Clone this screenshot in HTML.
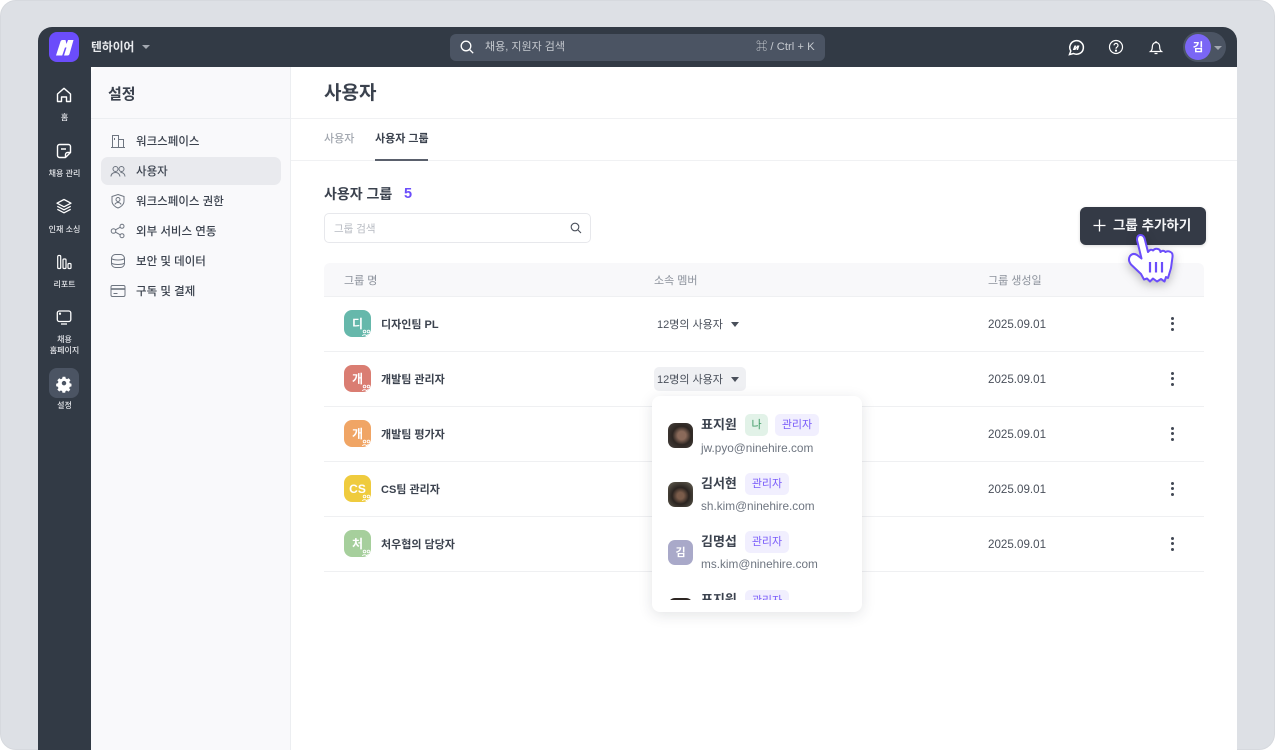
<!DOCTYPE html>
<html lang="ko"><head><meta charset="utf-8"><title>사용자 그룹</title>
<style>
*{box-sizing:border-box;margin:0;padding:0}
html,body{width:1275px;height:750px;overflow:hidden;background:#fff;font-family:"Liberation Sans","Noto Sans CJK KR",sans-serif;color:#343a46}
.a{position:absolute;white-space:nowrap}
#bg{left:0;top:0;width:1275px;height:750px;background:#dde0e5;border-radius:16px;border:1px solid #d6d9de}
#win{left:38px;top:27px;width:1199px;height:723px;background:#fff;border-radius:14px 14px 0 0;overflow:hidden}
#dark{left:38px;top:27px;width:1199px;height:40px;background:#323a45;border-radius:14px 14px 0 0}
#rail{left:38px;top:60px;width:53px;height:690px;background:#323a45}
#side{left:91px;top:67px;width:200px;height:683px;background:#f9f9fb;border-radius:8px 0 0 0;border-right:1px solid #eceef1}
.rl{left:38px;width:53px;text-align:center;font-size:8px;line-height:11px;color:#e4e6ea;font-weight:500;white-space:normal}
.mi{left:136px;font-size:11.5px;line-height:16px;font-weight:500;color:#3b424e}
svg{position:absolute;overflow:visible}
.th{font-size:11px;line-height:16px;color:#8c929c;top:273px}
.rowl{left:324px;width:880px;height:1px;background:#eff0f2}
.gi{left:344px;width:27px;height:27px;border-radius:8px;color:#fff;font-size:12px;font-weight:700;line-height:28px;text-align:center}
.gn{left:381px;font-size:11px;font-weight:700;line-height:16px;color:#3b424e}
.um{left:657px;font-size:11px;line-height:16px;color:#4a505b}
.dt{left:988px;font-size:11.6px;line-height:16px;color:#4a505b}
.kd{left:1171px;width:3px;height:3px;border-radius:50%;background:#424854}
.pn{font-size:13px;font-weight:700;line-height:18px;color:#3b424e}
.em{font-size:11.8px;line-height:16px;color:#6e7580}
.bd{height:22px;border-radius:5px;background:#f1effe;color:#7a5cfa;font-size:11px;line-height:23px;text-align:center}
</style></head><body>
<div class="a" id="bg"></div>
<div class="a" id="win"></div>
<div class="a" id="dark"></div>
<div class="a" id="rail"></div>
<div class="a" id="side"></div>

<!-- logo -->
<div class="a" style="left:49px;top:32px;width:30px;height:30px;border-radius:8px;background:#6b4dfb"></div>
<svg style="left:49px;top:32px" width="30" height="30"><path fill="#fff" d="M7 23.500 L11.500 9.500 Q12 8 13.500 8 L16.500 8 L17.500 12 L19 8 L24.500 8 L20.500 22 Q20 23.500 18.500 23.500 L15 23.500 L17.500 15.500 L16 15.500 L13.200 23.500 Z"/></svg>
<div class="a" style="left:91px;top:38px;font-size:11.8px;line-height:18px;font-weight:700;color:#e9ebee">텐하이어</div>
<div class="a" style="left:142px;top:45px;width:0;height:0;border-left:4px solid transparent;border-right:4px solid transparent;border-top:4px solid #a3a8b0"></div>

<!-- search -->
<div class="a" style="left:450px;top:34px;width:375px;height:27px;border-radius:6px;background:#4b5463"></div>
<svg style="left:460px;top:40px" width="15" height="15" fill="none" stroke="#fff" stroke-width="1.3"><circle cx="6" cy="6" r="4.800"/><path d="M9.500 9.500l3.700 3.700"/></svg>
<div class="a" style="left:485px;top:39px;font-size:11px;line-height:16px;color:#c5c9cf">채용, 지원자 검색</div>
<div class="a" style="left:756px;top:39px;font-size:11.300px;line-height:16px;color:#c5c9cf">⌘ / Ctrl + K</div>

<!-- top icons -->
<svg style="left:1067px;top:38.500px" width="18" height="18" fill="none" stroke="#fff" stroke-width="1.500"><path d="M2.500 15.500 L3.800 12 A6.800 6.800 0 1 1 6.500 14.500Z"/><path d="M5.800 11 L7.500 6.500 H9.300 L8.500 9 L10.300 6.500 H12.500 L11 11 H9.500 L10.200 8.800 L8.300 11Z" fill="#fff" stroke="none"/></svg>
<svg style="left:1107px;top:38px" width="18" height="18" fill="none" stroke="#fff" stroke-width="1.200"><circle cx="9" cy="9" r="6.500"/><path d="M7 7.300a2 2 0 1 1 3 1.800c-.7.400-1 .8-1 1.600"/><circle cx="9" cy="12.600" r=".5" fill="#fff"/></svg>
<svg style="left:1147px;top:37.500px" width="18" height="18" fill="none" stroke="#fff" stroke-width="1.200"><path d="M3.500 13.500h11c-1.300-1-1.800-2.200-1.800-4.500 0-2.700-1.500-4.500-3.700-4.500S5.300 6.300 5.300 9c0 2.300-.5 3.500-1.800 4.500z"/><path d="M7.500 15.500h3M9 3v1.500"/></svg>
<div class="a" style="left:1183px;top:32px;width:43px;height:30px;border-radius:15px;background:#4b5463"></div>
<div class="a" style="left:1185px;top:34px;width:26px;height:26px;border-radius:50%;background:#7a66f5;color:#fff;font-size:11.500px;font-weight:700;line-height:28px;text-align:center">김</div>
<div class="a" style="left:1214px;top:46px;width:0;height:0;border-left:4px solid transparent;border-right:4px solid transparent;border-top:4px solid #a3a8b0"></div>

<!-- rail -->
<svg style="left:55px;top:86px" width="18" height="18" fill="none" stroke="#fff" stroke-width="1.400" stroke-linejoin="round"><path d="M2.500 8 L9 2.300 L15.500 8 V15.500 H11.500 V11 H6.500 V15.500 H2.500Z"/></svg>
<div class="a rl" style="top:112px">홈</div>
<svg style="left:55px;top:142px" width="18" height="18" fill="none" stroke="#fff" stroke-width="1.400" stroke-linejoin="round"><path d="M4.500 2.500h9a2 2 0 0 1 2 2v6l-5 5h-6a2 2 0 0 1-2-2v-9a2 2 0 0 1 2-2z"/><path d="M6 7h5M10.500 15.500v-3a2 2 0 0 1 2-2h3"/></svg>
<div class="a rl" style="top:168px">채용 관리</div>
<svg style="left:55px;top:197px" width="18" height="18" fill="none" stroke="#fff" stroke-width="1.300" stroke-linejoin="round"><path d="M9 2.500 L16 6.200 L9 9.800 L2 6.200Z"/><path d="M2.300 9.300 L9 12.800 L15.700 9.300M2.300 12.300 L9 15.800 L15.700 12.300"/></svg>
<div class="a rl" style="top:224px">인재 소싱</div>
<svg style="left:55px;top:253px" width="18" height="18" fill="none" stroke="#fff" stroke-width="1.200"><rect x="2.700" y="2.500" width="3" height="13" rx="1"/><rect x="8" y="6" width="3" height="9.500" rx="1"/><rect x="13" y="10.500" width="3" height="5" rx="1"/></svg>
<div class="a rl" style="top:279px">리포트</div>
<svg style="left:55px;top:308px" width="18" height="18" fill="none" stroke="#fff" stroke-width="1.300"><rect x="2.300" y="3" width="13.500" height="10.500" rx="2"/><path d="M6 16h6"/><circle cx="5" cy="5.700" r=".5" fill="#fff"/></svg>
<div class="a rl" style="top:334px">채용<br>홈페이지</div>
<div class="a" style="left:49px;top:368px;width:30px;height:30px;border-radius:8px;background:#4b5463"></div>
<svg style="left:55px;top:374px" width="18" height="18"><path fill="#fff" fill-rule="evenodd" d="M7.500 2h3l.4 2 1.500.7 1.800-1 2 2.300-1.300 1.600.4 1.500 2 .7v2.900l-2 .6-.5 1.500 1.200 1.700-2.100 2.100-1.700-1.200-1.500.6-.4 1.900h-3l-.4-2-1.400-.6-1.800 1.200-2.100-2.100 1.200-1.700-.6-1.500-1.900-.6V9.800l2-.7.5-1.500-1.200-1.700 2.100-2.200 1.700 1.100 1.500-.6z M9 6.700a2.500 2.500 0 1 0 0 5 2.500 2.500 0 0 0 0-5z" transform="translate(.9 .9) scale(.9)"/></svg>
<div class="a rl" style="top:400px">설정</div>

<!-- settings menu -->
<div class="a" style="left:108px;top:84px;font-size:15px;line-height:22px;font-weight:700;color:#3b424e">설정</div>
<div class="a" style="left:91px;top:118px;width:199px;height:1px;background:#eceef1"></div>
<div class="a" style="left:101px;top:157px;width:180px;height:28px;border-radius:7px;background:#e9eaee"></div>
<svg style="left:110px;top:133px" width="16" height="16" fill="none" stroke="#6e7580" stroke-width="1"><path d="M1 14.500h14M2.500 14.500V2.500h6v12M8.500 6.500h5v8M4.500 5v2"/></svg>
<div class="a mi" style="top:134px">워크스페이스</div>
<svg style="left:110px;top:163px" width="16" height="16" fill="none" stroke="#6e7580" stroke-width="1"><circle cx="5.500" cy="6" r="2.500"/><circle cx="11.500" cy="6" r="2.500"/><path d="M1 13.500c0-2.500 2-4 4.500-4s4 1.500 4.500 4M10.500 9.500c2.500-.3 4.500 1.500 4.500 4"/></svg>
<div class="a mi" style="top:164px">사용자</div>
<svg style="left:110px;top:193px" width="16" height="16" fill="none" stroke="#6e7580" stroke-width="1"><path d="M8 1.500 L14 3.500 V8 C14 11.500 11 14 8 15 C5 14 2 11.500 2 8 V3.500Z"/><circle cx="8" cy="6.500" r="2"/><path d="M4.800 11.500c.8-1.500 1.800-2 3.200-2s2.400.5 3.200 2"/></svg>
<div class="a mi" style="top:194px">워크스페이스 권한</div>
<svg style="left:110px;top:223px" width="16" height="16" fill="none" stroke="#6e7580" stroke-width="1"><circle cx="3.500" cy="8" r="2.300"/><circle cx="12" cy="3.300" r="2"/><circle cx="12" cy="12.700" r="2"/><path d="M5.500 6.800l4.800-2.600M5.500 9.200l4.800 2.600"/></svg>
<div class="a mi" style="top:224px">외부 서비스 연동</div>
<svg style="left:110px;top:253px" width="16" height="16" fill="none" stroke="#6e7580" stroke-width="1"><rect x="1.500" y="1.500" width="13" height="13" rx="4"/><path d="M1.500 5.500c2 2 11 2 13 0M1.500 10c2 2 11 2 13 0"/></svg>
<div class="a mi" style="top:254px">보안 및 데이터</div>
<svg style="left:110px;top:283px" width="16" height="16" fill="none" stroke="#6e7580" stroke-width="1"><rect x="1" y="2.500" width="14" height="11" rx="1.500"/><path d="M1 6h14" stroke-width="1.600"/><path d="M3.500 10.500h4"/></svg>
<div class="a mi" style="top:284px">구독 및 결제</div>

<!-- main -->
<div class="a" style="left:324px;top:80px;font-size:19px;line-height:27px;font-weight:700;color:#3b424e">사용자</div>
<div class="a" style="left:291px;top:118px;width:946px;height:1px;background:#f0f1f3"></div>
<div class="a" style="left:324px;top:131px;font-size:11px;line-height:16px;font-weight:500;color:#a3a8b0">사용자</div>
<div class="a" style="left:375px;top:131px;font-size:11px;line-height:16px;font-weight:700;color:#3b424e">사용자 그룹</div>
<div class="a" style="left:291px;top:160px;width:946px;height:1px;background:#f0f1f3"></div>
<div class="a" style="left:375px;top:159px;width:53px;height:1.500px;background:#5a606c"></div>
<div class="a" style="left:324px;top:184px;font-size:14px;line-height:20px;font-weight:700;color:#3b424e">사용자 그룹</div>
<div class="a" style="left:404px;top:184px;font-size:14.500px;line-height:20px;font-weight:700;color:#6b4dfb">5</div>
<div class="a" style="left:324px;top:213px;width:267px;height:30px;border:1px solid #e7e8ec;border-radius:5px;background:#fff"></div>
<div class="a" style="left:334px;top:221px;font-size:10.500px;line-height:16px;color:#b6bac1">그룹 검색</div>
<svg style="left:570px;top:222px" width="12" height="12" fill="none" stroke="#4a505b" stroke-width="1.100"><circle cx="5" cy="5" r="3.800"/><path d="M8 8l3 3"/></svg>

<!-- add button -->
<div class="a" style="left:1080px;top:207px;width:126px;height:38px;border-radius:6px;background:#343a46;box-shadow:0 1px 3px rgba(0,0,0,.15)"></div>
<svg style="left:1092px;top:218px" width="15" height="15" stroke="#fff" stroke-width="1.300"><path d="M7.500 1.500v12M1.500 7.500h12"/></svg>
<div class="a" style="left:1113px;top:216px;font-size:13.500px;line-height:19px;font-weight:700;color:#f3f4f6">그룹 추가하기</div>

<!-- table -->
<div class="a" style="left:324px;top:263px;width:880px;height:33px;background:#f8f8fa;border-radius:6px 6px 0 0"></div>
<div class="a th" style="left:344px">그룹 명</div>
<div class="a th" style="left:654px">소속 멤버</div>
<div class="a th" style="left:988px">그룹 생성일</div>
<div class="a rowl" style="top:296px"></div>
<div class="a rowl" style="top:351px"></div>
<div class="a rowl" style="top:406px"></div>
<div class="a rowl" style="top:461px"></div>
<div class="a rowl" style="top:516px"></div>
<div class="a rowl" style="top:571px"></div>

<div class="a gi" style="top:310px;background:#66b8ab">디</div>
<div class="a gn" style="top:317px">디자인팀 PL</div>
<div class="a gi" style="top:365px;background:#da7d72">개</div>
<div class="a gn" style="top:372px">개발팀 관리자</div>
<div class="a gi" style="top:420px;background:#f0a565">개</div>
<div class="a gn" style="top:427px">개발팀 평가자</div>
<div class="a gi" style="top:475px;background:#efcb3e">CS</div>
<div class="a gn" style="top:482px">CS팀 관리자</div>
<div class="a gi" style="top:530px;background:#a6cf9c">처</div>
<div class="a gn" style="top:537px">처우협의 담당자</div>
<svg style="left:0;top:0" width="1275" height="750" fill="none" stroke="#fff" stroke-width=".9">
<g><circle cx="364.500" cy="331.500" r="1.300"/><circle cx="368.500" cy="331.500" r="1.300"/><path d="M362.500 336c.2-1.800 3.800-1.800 4 0M366.500 336c.2-1.800 3.800-1.800 4 0"/></g>
<g transform="translate(0 55)"><circle cx="364.500" cy="331.500" r="1.300"/><circle cx="368.500" cy="331.500" r="1.300"/><path d="M362.500 336c.2-1.800 3.800-1.800 4 0M366.500 336c.2-1.800 3.800-1.800 4 0"/></g>
<g transform="translate(0 110)"><circle cx="364.500" cy="331.500" r="1.300"/><circle cx="368.500" cy="331.500" r="1.300"/><path d="M362.500 336c.2-1.800 3.800-1.800 4 0M366.500 336c.2-1.800 3.800-1.800 4 0"/></g>
<g transform="translate(0 165)"><circle cx="364.500" cy="331.500" r="1.300"/><circle cx="368.500" cy="331.500" r="1.300"/><path d="M362.500 336c.2-1.800 3.800-1.800 4 0M366.500 336c.2-1.800 3.800-1.800 4 0"/></g>
<g transform="translate(0 220)"><circle cx="364.500" cy="331.500" r="1.300"/><circle cx="368.500" cy="331.500" r="1.300"/><path d="M362.500 336c.2-1.800 3.800-1.800 4 0M366.500 336c.2-1.800 3.800-1.800 4 0"/></g>
</svg>

<div class="a um" style="top:317px">12명의 사용자</div>
<div class="a" style="left:731px;top:322px;width:0;height:0;border-left:4px solid transparent;border-right:4px solid transparent;border-top:5px solid #4a505b"></div>
<div class="a" style="left:654px;top:367px;width:92px;height:24px;border-radius:5px;background:#eff0f3"></div>
<div class="a um" style="top:372px">12명의 사용자</div>
<div class="a" style="left:731px;top:377px;width:0;height:0;border-left:4px solid transparent;border-right:4px solid transparent;border-top:5px solid #4a505b"></div>

<div class="a dt" style="top:317px">2025.09.01</div>
<div class="a dt" style="top:372px">2025.09.01</div>
<div class="a dt" style="top:427px">2025.09.01</div>
<div class="a dt" style="top:482px">2025.09.01</div>
<div class="a dt" style="top:537px">2025.09.01</div>
<div class="a kd" style="top:317px"></div><div class="a kd" style="top:322px"></div><div class="a kd" style="top:328px"></div>
<div class="a kd" style="top:372px"></div><div class="a kd" style="top:377px"></div><div class="a kd" style="top:383px"></div>
<div class="a kd" style="top:427px"></div><div class="a kd" style="top:432px"></div><div class="a kd" style="top:438px"></div>
<div class="a kd" style="top:482px"></div><div class="a kd" style="top:487px"></div><div class="a kd" style="top:493px"></div>
<div class="a kd" style="top:537px"></div><div class="a kd" style="top:542px"></div><div class="a kd" style="top:548px"></div>

<!-- dropdown -->
<div class="a" style="left:652px;top:396px;width:210px;height:216px;background:#fff;border-radius:8px;box-shadow:0 3px 14px rgba(40,45,60,.13)"></div>
<div class="a" style="left:653px;top:400px;width:209px;height:200px;overflow:hidden">
  <div class="a" style="left:15px;top:23px;width:25px;height:25px;border-radius:7px;background:radial-gradient(circle at 55% 50%,#8a6a5a 0 22%,#2d2622 50%,#4a4440 100%)"></div>
  <div class="a pn" style="left:48px;top:16px">표지원</div>
  <div class="a bd" style="left:92px;top:14px;width:23px;background:#e2f2e8;color:#3f9a66">나</div>
  <div class="a bd" style="left:122px;top:14px;width:44px">관리자</div>
  <div class="a em" style="left:48px;top:40px">jw.pyo@ninehire.com</div>

  <div class="a" style="left:15px;top:82px;width:25px;height:25px;border-radius:7px;background:radial-gradient(circle at 50% 55%,#7a5c4a 0 18%,#2a2420 45%,#6a6658 100%)"></div>
  <div class="a pn" style="left:48px;top:75px">김서현</div>
  <div class="a bd" style="left:92px;top:73px;width:44px">관리자</div>
  <div class="a em" style="left:48px;top:98px">sh.kim@ninehire.com</div>

  <div class="a" style="left:15px;top:140px;width:25px;height:25px;border-radius:7px;background:#a9a9c9;color:#fff;font-size:11px;font-weight:700;line-height:26px;text-align:center">김</div>
  <div class="a pn" style="left:48px;top:133px">김명섭</div>
  <div class="a bd" style="left:92px;top:131px;width:44px">관리자</div>
  <div class="a em" style="left:48px;top:156px">ms.kim@ninehire.com</div>

  <div class="a" style="left:15px;top:198px;width:25px;height:25px;border-radius:7px;background:#2d2622"></div>
  <div class="a pn" style="left:48px;top:191px">표지원</div>
  <div class="a bd" style="left:92px;top:190px;width:44px">관리자</div>
</div>

<!-- cursor -->
<svg style="left:0;top:0;filter:drop-shadow(0 3px 5px rgba(0,0,0,.25))" width="1275" height="750">
<path d="M1137 240 Q1137 235 1140.500 235 Q1144 235 1145 240 L1148 252 Q1150.500 248.500 1153 250.500 Q1155 248 1158 249 Q1160 249.500 1160.500 252 Q1163 249.500 1165.500 252 Q1168 250.500 1170.500 252 Q1173 253 1172.500 257 L1171 268 L1168 278 L1166 277 L1164.500 281.500 L1161 279 L1157 281.500 L1153 278.500 L1150 281.500 L1147 278.500 L1144 279.500 L1141 274 L1131 264.500 Q1127.500 260 1130 256 Q1133 252.500 1137 255 L1141.500 258.500 Z" fill="#fff" stroke="#6b4dfb" stroke-width="2" stroke-linejoin="round"/>
<path d="M1150 262v10.500M1156 262v10.500M1162 262v10.500" stroke="#6b4dfb" stroke-width="2.200" fill="none"/>
</svg>
</body></html>
